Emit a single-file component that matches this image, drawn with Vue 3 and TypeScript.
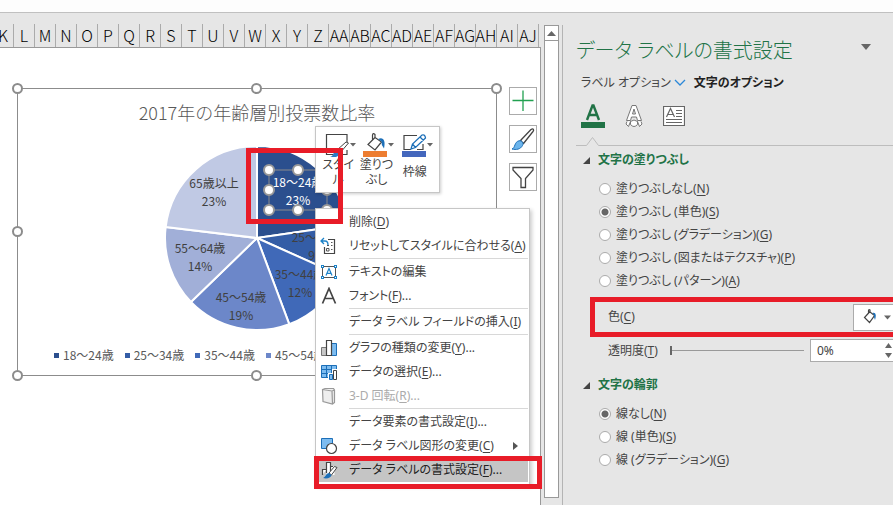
<script setup lang="ts">
import { ref } from 'vue'

interface Slice {
  label: string
  percent: string
  start: number
  end: number
  color: string
  x: number
  y: number
  light?: boolean
}

interface MenuItem {
  id: string
  text: string
  accel?: string
  more?: boolean
  icon?: string
  divider?: boolean
  disabled?: boolean
  submenu?: boolean
  active?: boolean
}

interface Option {
  text: string
  accel: string
}

const columns = [
  ...'KLMNOPQRSTUVWXYZ'.split(''),
  ...'ABCDEFGHIJ'.split('').map((c) => 'A' + c),
]

const slices: Slice[] = [
  { label: '18〜24歳', percent: '23%', start: 0, end: 81.7, color: '#2b4f8e', x: 41, y: -51, light: true },
  { label: '25〜34歳', percent: '9%', start: 81.7, end: 114.2, color: '#345da6', x: 60, y: 4 },
  { label: '35〜44歳', percent: '12%', start: 114.2, end: 159.5, color: '#4069b8', x: 43, y: 41 },
  { label: '45〜54歳', percent: '19%', start: 159.5, end: 225.9, color: '#6c87c9', x: -16, y: 64 },
  { label: '55〜64歳', percent: '14%', start: 225.9, end: 276.8, color: '#a1afd8', x: -57, y: 15 },
  { label: '65歳以上', percent: '23%', start: 276.8, end: 360, color: '#c0c9e4', x: -43, y: -50 },
]

const legendEntries = slices.slice(0, 4)

const radius = 92

function slicePath(slice: Slice): string {
  const at = (deg: number) => {
    const a = (deg * Math.PI) / 180
    return `${(radius * Math.sin(a)).toFixed(2)} ${(-radius * Math.cos(a)).toFixed(2)}`
  }
  const large = slice.end - slice.start > 180 ? 1 : 0
  return `M0 0L${at(slice.start)}A${radius} ${radius} 0 ${large} 1 ${at(slice.end)}Z`
}

const labelHandles = [
  [12, -68], [41, -68], [70, -68],
  [12, -48], [70, -48],
  [12, -28], [41, -28], [70, -28],
]

const menu: MenuItem[] = [
  { id: 'delete', text: '削除', accel: 'D' },
  { id: 'reset', text: 'リセットしてスタイルに合わせる', accel: 'A', icon: 'reset' },
  { id: 'edit', text: 'テキストの編集', icon: 'textbox', divider: true },
  { id: 'font', text: 'フォント', accel: 'F', more: true, icon: 'font' },
  { id: 'field', text: 'データ ラベル フィールドの挿入', accel: 'I', divider: true },
  { id: 'type', text: 'グラフの種類の変更', accel: 'Y', more: true, icon: 'chart', divider: true },
  { id: 'data', text: 'データの選択', accel: 'E', more: true, icon: 'select' },
  { id: 'rotate', text: '3-D 回転', accel: 'R', more: true, icon: 'cube', disabled: true },
  { id: 'point', text: 'データ要素の書式設定', accel: 'I', more: true, divider: true },
  { id: 'shape', text: 'データ ラベル図形の変更', accel: 'C', icon: 'shape', submenu: true },
  { id: 'format', text: 'データ ラベルの書式設定', accel: 'F', more: true, icon: 'format', active: true },
]

const fills: Option[] = [
  { text: '塗りつぶしなし', accel: 'N' },
  { text: '塗りつぶし (単色)', accel: 'S' },
  { text: '塗りつぶし (グラデーション)', accel: 'G' },
  { text: '塗りつぶし (図またはテクスチャ)', accel: 'P' },
  { text: '塗りつぶし (パターン)', accel: 'A' },
]

const outlines: Option[] = [
  { text: '線なし', accel: 'N' },
  { text: '線 (単色)', accel: 'S' },
  { text: '線 (グラデーション)', accel: 'G' },
]

const fill = ref('S')
const outline = ref('N')
const transparency = ref(0)

function step(delta: number) {
  transparency.value = Math.min(100, Math.max(0, Number(transparency.value) + delta))
}

function typeTransparency(event: Event) {
  const value = parseInt((event.target as HTMLInputElement).value, 10)
  transparency.value = Number.isNaN(value) ? 0 : Math.min(100, Math.max(0, value))
}
</script>

<template>
  <div class="window">
    <div class="ribbon-edge"></div>
    <div class="workspace">
      <main class="sheet">
        <div class="column-heads">
          <span v-for="name in columns" :key="name" class="column-head">{{ name }}</span>
        </div>
        <div class="grid">
          <section class="chart">
            <h2 class="chart-title">2017年の年齢層別投票数比率</h2>
            <svg class="pie" viewBox="-92 -92 184 184" width="184" height="184">
              <path
                v-for="s in slices" :key="s.label" :d="slicePath(s)" :fill="s.color"
                stroke="#fff" stroke-width="2" stroke-linejoin="round"
              />
              <g v-for="s in slices" :key="s.label" :class="['slice-label', { light: s.light }]">
                <text :x="s.x" :y="s.y">{{ s.label }}</text>
                <text :x="s.x" :y="s.y + 18">{{ s.percent }}</text>
              </g>
              <rect x="12" y="-68" width="58" height="40" fill="none" stroke="#8c8c8c" />
              <circle
                v-for="([x, y], i) in labelHandles" :key="i" :cx="x" :cy="y" r="5"
                fill="#fff" stroke="#999" stroke-width="2"
              />
            </svg>
            <div class="legend">
              <span v-for="s in legendEntries" :key="s.label" class="legend-item">
                <svg width="5" height="5"><rect width="5" height="5" :fill="s.color" /></svg>
                {{ s.label }}
              </span>
            </div>
            <i class="handle top left"></i>
            <i class="handle top middle"></i>
            <i class="handle top right"></i>
            <i class="handle center left"></i>
            <i class="handle center right"></i>
            <i class="handle bottom left"></i>
            <i class="handle bottom middle"></i>
            <i class="handle bottom right"></i>
          </section>

          <div class="chart-buttons">
            <button type="button" aria-label="グラフ要素">
              <svg width="26" height="26" fill="none" stroke="#21a050" stroke-width="1.3">
                <path d="M13 2.500V23M2.500 12.500H23.500" />
              </svg>
            </button>
            <button type="button" aria-label="グラフ スタイル">
              <svg width="26" height="26" fill="none" stroke-linejoin="round">
                <path d="M10.500 14.500L21 3.500C23 2 24.500 3.500 23 5.500L13.500 17.500Z" fill="#fff" stroke="#444" stroke-width="1.300" />
                <path d="M2 23C5.500 22 4 16 9 14.800C12 14.300 14 17 12.500 19.500C10.500 23.500 6 24 2 23Z" fill="#6cb5ec" stroke="#1c6fb8" />
              </svg>
            </button>
            <button type="button" aria-label="グラフ フィルター">
              <svg width="26" height="26" fill="none" stroke="#444" stroke-width="1.300">
                <path d="M3 3.500H23V6L15.500 14.500V23.500H11V14.500L3 6Z" />
              </svg>
            </button>
          </div>

          <div class="mini-toolbar">
            <button type="button">
              <svg width="31" height="24" fill="none">
                <path d="M22 9V1.500H1.500V21.500H8M22 17V21.500H17" stroke="#444" stroke-width="1.200" />
                <path d="M12 17L21 9L23.500 10L15 20Z" fill="#fff" stroke="#444" />
                <path d="M5 24C9 23 8 18 12 17.500L15 20C14 24 9 25 5 24Z" fill="#2b7ec6" />
                <path d="M25 10H31L28 13.500Z" fill="#666" />
              </svg>
              <span>スタイ<br />ル</span>
            </button>
            <button type="button">
              <svg width="31" height="24" fill="none">
                <path d="M12 4.500L5 11.500L12 17L18.500 9L12 4.500V1.500Q10 -0.500 9.500 2V7" stroke="#444" stroke-width="1.200" />
                <path d="M15 6C20 3.500 23 7 21 15.500Q18 12 18.500 8.500Z" fill="#1c6fb8" />
                <path d="M25 10H31L28 13.500Z" fill="#666" />
                <path d="M0 18H24V24H0Z" fill="#ed7d31" />
              </svg>
              <span>塗りつ<br />ぶし</span>
            </button>
            <button type="button">
              <svg width="31" height="24" fill="none">
                <path d="M15 2.500H2V16.500H9M21 11V16.500H15" stroke="#444" stroke-width="1.200" />
                <path d="M9 16L10.500 11L20 2Q23 1 23.500 5L13.500 14.500ZM18 4L21.500 7.500M10.500 11L13.500 14.500" stroke="#1c6fb8" stroke-width="1.300" fill="#fff" />
                <path d="M25 10H31L28 13.500Z" fill="#666" />
                <path d="M0 18H24V24H0Z" fill="#4467bd" />
              </svg>
              <span>枠線</span>
            </button>
          </div>

          <ul class="context-menu">
            <li v-for="item in menu" :key="item.id" :class="{ divider: item.divider }">
              <button type="button" :class="{ active: item.active }" :disabled="item.disabled">
                <svg class="menu-icon" width="18" height="18" fill="none">
                  <g v-if="item.icon === 'reset'">
                    <path d="M8 2.500H14.500V16.500H4.500V10" stroke="#444" stroke-width="1.200" />
                    <path d="M4 1L1 4L4 7M1.500 4H5Q8 4 8 8" stroke="#1c82c8" stroke-width="1.300" />
                    <path d="M7 8.500H9M11 8.500H12.500M6.500 11.500H9V14H6.500ZM11 12.500H12.500M11 5.500H12.500" stroke="#555" />
                  </g>
                  <g v-else-if="item.icon === 'textbox'">
                    <path d="M2.500 3.500H15.500V14.500H2.500Z" stroke="#555" />
                    <path d="M6 12.500L9 5.500L12 12.500M7 10.300H11" stroke="#1c82c8" stroke-width="1.200" />
                    <path d="M1 2H4V5H1ZM14 2H17V5H14ZM1 13H4V16H1ZM14 13H17V16H14Z" fill="#1c82c8" />
                    <path d="M2 3H3V4H2ZM15 3H16V4H15ZM2 14H3V15H2ZM15 14H16V15H15Z" fill="#fff" />
                  </g>
                  <path v-else-if="item.icon === 'font'" d="M2.500 16.500L9 1.500L15.500 16.500M5 11.500H13" stroke="#444" stroke-width="1.700" />
                  <g v-else-if="item.icon === 'chart'">
                    <path d="M1.500 8.500H6.500V16.500H1.500Z" fill="#c8c8c8" stroke="#777" />
                    <path d="M11.500 4.500H16.500V16.500H11.500Z" fill="#7dbcf0" stroke="#1c6fb8" />
                    <path d="M6.500 1.500H11.500V16.500H6.500Z" fill="#fff" stroke="#444" stroke-width="1.200" />
                  </g>
                  <g v-else-if="item.icon === 'select'">
                    <path d="M1.500 2.500H16.500V14.500H1.500Z" fill="#7dbcf0" stroke="#1c6fb8" />
                    <path d="M1.500 6.500H16.500M1.500 10.500H16.500M6.500 2.500V14.500M11.500 2.500V14.500" stroke="#1c6fb8" />
                    <path d="M8 10H12V6H18V18H8Z" fill="#fff" />
                    <path d="M9.500 11.500H12.500V16.500H9.500Z" fill="#7dbcf0" stroke="#1c6fb8" />
                    <path d="M13.500 7.500H16.500V16.500H13.500Z" fill="#fff" stroke="#444" />
                  </g>
                  <path v-else-if="item.icon === 'cube'" d="M2.500 2.500L5 1.500H13.500L14.500 3V15.500L12.500 17L3 14.500ZM2.500 2.500L12 4L14.500 3M12 4L12.500 17" fill="#eee" stroke="#999" stroke-width="1.200" />
                  <g v-else-if="item.icon === 'shape'">
                    <path d="M1.500 1.500H12.500V11.500H1.500Z" fill="#7dbcf0" stroke="#1c6fb8" />
                    <circle cx="11.500" cy="11.500" r="5" fill="#fff" stroke="#444" stroke-width="1.200" />
                  </g>
                  <g v-else-if="item.icon === 'format'">
                    <path d="M2.500 14V8.500H6.500V1.500H10.500V5.500H14.500V14H6.500V8.500Z" fill="#fff" />
                    <path d="M6.500 12V1.500H10.500V10M2.500 14V8.500H6.500M10.500 5.500H13" stroke="#444" stroke-width="1.200" />
                    <path d="M9 12L14.500 5.500L17 6.500L11.500 14Z" fill="#fff" stroke="#444" />
                    <path d="M3 17C6 16 6 12 9 12L11.500 14C11 17 7 18 3 17Z" fill="#1c6fb8" />
                  </g>
                </svg>
                <span>{{ item.text }}<template v-if="item.accel">(<u>{{ item.accel }}</u>)</template><template v-if="item.more">...</template></span>
                <svg v-if="item.submenu" class="submenu-arrow" width="5" height="8"><path d="M0 0L5 4L0 8Z" fill="#555" /></svg>
              </button>
            </li>
          </ul>

          <div class="callout label-callout"></div>
          <div class="callout menu-callout"></div>
        </div>
      </main>

      <div class="scrollbar">
        <button type="button" aria-label="上へスクロール">
          <svg width="9" height="5"><path d="M0 5L4.500 0L9 5Z" fill="#666" /></svg>
        </button>
        <div class="thumb"></div>
      </div>

      <aside class="pane">
        <header class="pane-header">
          <h1>データ ラベルの書式設定</h1>
          <button type="button" aria-label="作業ウィンドウのオプション">
            <svg width="10" height="6"><path d="M0 0H10L5 6Z" fill="#666" /></svg>
          </button>
        </header>

        <nav class="tabs">
          <button type="button">
            ラベル オプション
            <svg width="12" height="8" fill="none" stroke="#2b88d8" stroke-width="1.300"><path d="M1 1L6 6L11 1" /></svg>
          </button>
          <button type="button" class="current">文字のオプション</button>
        </nav>

        <div class="pane-icons">
          <button type="button" aria-label="文字の塗りつぶしと輪郭">
            <svg width="24" height="24" fill="none">
              <path d="M6 16L11.500 1.500H12.500L18 16M8 11H16" stroke="#217346" stroke-width="2.400" />
              <path d="M0 18H24V24H0Z" fill="#217346" />
            </svg>
          </button>
          <button type="button" aria-label="文字の効果">
            <svg width="18" height="24" fill="none" stroke="#777">
              <path d="M1.500 16.500L7 1.500H11L16.500 16.500H12.500L11.500 13H6.500L5.500 16.500ZM7.500 10H10.500L9 5Z" fill="#fff" />
              <path d="M2 17.500L1 20L3.500 22.500L5.500 17.500M16 17.500L17 20L14.500 22.500L12.500 17.500M5.500 17.500Q9 14.500 12.500 17.500V20.500Q9 24.500 5.500 20.500Z" fill="#fff" />
            </svg>
          </button>
          <button type="button" aria-label="テキスト ボックス">
            <svg width="22" height="20" fill="none" stroke="#666">
              <path d="M0.500 0.500H21.500V19.500H0.500Z" fill="#fff" stroke-width="1.200" />
              <path d="M3.500 11L7.500 2.500L11.500 11M5 8.500H10" stroke-width="1.200" />
              <path d="M13 4.500H19M13 7.500H19M13 10.500H19M3 13.500H19M3 16.500H19" />
            </svg>
          </button>
        </div>

        <div class="notch">
          <svg width="25" height="10" fill="none" stroke="#bdbdbd"><path d="M0 9.500H10.500L16.500 1.500L22.500 9.500H25" /></svg>
          <span></span>
        </div>

        <fieldset>
          <legend>
            <svg width="7" height="7"><path d="M7 0V7H0Z" fill="#444" /></svg>
            文字の塗りつぶし
          </legend>
          <label v-for="o in fills" :key="o.accel" class="option">
            <input v-model="fill" type="radio" name="fill" :value="o.accel" />
            <span>{{ o.text }}(<u>{{ o.accel }}</u>)</span>
          </label>
          <div class="color-row">
            <label for="color">色(<u>C</u>)</label>
            <button id="color" type="button">
              <svg width="28" height="16" fill="none">
                <path d="M7 2.500L1.500 8.500L6.500 13.500L11.500 6.500L7 3V1Q5.500 0 5.500 2V5" stroke="#444" stroke-width="1.200" />
                <path d="M9.500 4C13 3 13.500 7 12 11Q10.500 8 11 6Z" fill="#1c6fb8" />
                <path d="M21 6.500H28L24.500 10.500Z" fill="#666" />
              </svg>
            </button>
          </div>
          <div class="transparency-row">
            <label for="transparency">透明度(<u>T</u>)</label>
            <input id="transparency" v-model="transparency" type="range" min="0" max="100" />
            <div class="spinner">
              <input type="text" aria-label="透明度" :value="transparency + '%'" @change="typeTransparency" />
              <div class="spin-buttons">
                <button type="button" aria-label="増やす" @click="step(1)">
                  <svg width="7" height="5"><path d="M0 5L3.500 0L7 5Z" fill="#666" /></svg>
                </button>
                <button type="button" aria-label="減らす" @click="step(-1)">
                  <svg width="7" height="5"><path d="M0 0H7L3.500 5Z" fill="#666" /></svg>
                </button>
              </div>
            </div>
          </div>
        </fieldset>

        <fieldset class="outline-group">
          <legend>
            <svg width="7" height="7"><path d="M7 0V7H0Z" fill="#444" /></svg>
            文字の輪郭
          </legend>
          <label v-for="o in outlines" :key="o.accel" class="option">
            <input v-model="outline" type="radio" name="outline" :value="o.accel" />
            <span>{{ o.text }}(<u>{{ o.accel }}</u>)</span>
          </label>
        </fieldset>
      </aside>
    </div>
  </div>
</template>

<style>
body {
  background: #e6e6e6;
}
</style>

<style scoped>
.window {
  display: flex;
  flex-direction: column;
  min-height: 100vh;
  overflow: hidden;
  background: #e6e6e6;
  color: #444;
  font: 12px/20px "Noto Sans", "Noto Sans CJK JP", sans-serif;
  font-feature-settings: "palt";
}

.window *,
.window {
  box-sizing: border-box;
}

button,
input {
  margin: 0;
  padding: 0;
  border: 0;
  border-radius: 0;
  background: none;
  color: inherit;
  font: inherit;
  font-feature-settings: inherit;
}

svg {
  display: block;
  flex: none;
}

u {
  text-underline-offset: 2px;
}

.ribbon-edge {
  height: 13px;
  border-bottom: 1px solid #c0c0c0;
  background: #fdfdfd;
}

.workspace {
  display: grid;
  flex: 1;
  grid-template-columns: minmax(0, 1fr) 15px 331px;
  column-gap: 3px;
}

/* Worksheet */
.sheet {
  display: flex;
  flex-direction: column;
  min-width: 0;
  padding-top: 11px;
}

.column-heads {
  display: flex;
  overflow: hidden;
  height: 24px;
  padding-right: 3px;
  border-bottom: 1px solid #999;
}

.column-head {
  display: flex;
  flex: none;
  justify-content: center;
  width: 21px;
  border-right: 1px solid #ababab;
  color: #000;
  font-weight: 300;
  font-size: 16px;
  font-family: "Noto Sans CJK JP", sans-serif;
  line-height: 22px;
  white-space: nowrap;
}

.column-head:first-child {
  margin-left: -7px;
}

.grid {
  position: relative;
  flex: 1;
  min-height: 442px;
  border-right: 1px solid #999;
  background: #fff;
}

.chart {
  position: absolute;
  top: 40px;
  left: 17px;
  display: flex;
  flex-direction: column;
  align-items: center;
  width: 480px;
  height: 288px;
  padding-top: 9px;
  border: 1px solid #8c8c8c;
  font-family: "Noto Sans CJK JP", sans-serif;
}

.chart-title {
  margin: 0 0 20px;
  color: #595959;
  font-weight: 300;
  font-size: 18px;
  line-height: 28px;
  font-feature-settings: normal;
}

.pie {
  overflow: visible;
}

.slice-label {
  fill: #404040;
  font-feature-settings: normal;
  text-anchor: middle;
}

.slice-label.light {
  fill: #fff;
}

.legend {
  display: flex;
  align-self: stretch;
  gap: 11px;
  margin-top: 15px;
  padding-left: 36px;
  overflow: hidden;
  color: #595959;
  font-feature-settings: normal;
}

.legend-item {
  display: flex;
  flex: none;
  align-items: center;
  gap: 4px;
}

.handle {
  position: absolute;
  width: 11px;
  height: 11px;
  border: 2px solid #8c8c8c;
  border-radius: 50%;
  background: #fff;
}

.handle.top { top: -6px; }
.handle.center { top: calc(50% - 6px); }
.handle.bottom { bottom: -6px; }
.handle.left { left: -6px; }
.handle.middle { left: calc(50% - 6px); }
.handle.right { right: -6px; }

.chart-buttons {
  position: absolute;
  top: 39px;
  left: 509px;
  display: grid;
  gap: 10px;
}

.chart-buttons button {
  width: 28px;
  height: 28px;
  border: 1px solid #ababab;
  background: #fff;
}

.mini-toolbar {
  position: absolute;
  top: 78px;
  left: 315px;
  display: flex;
  width: 125px;
  height: 67px;
  padding: 6px 5px 0 3px;
  border: 1px solid #c6c6c6;
  background: #fff;
  box-shadow: 1px 1px 3px #0003;
}

.mini-toolbar button {
  display: flex;
  flex: 1 0 0;
  flex-direction: column;
  align-items: center;
  line-height: 15px;
}

.mini-toolbar svg {
  margin-left: 5px;
}

.mini-toolbar span {
  display: grid;
  align-content: center;
  height: 30px;
  text-align: center;
  white-space: nowrap;
}

.mini-toolbar span {
  display: block;
}

.mini-toolbar button:last-child span {
  line-height: 30px;
}

.context-menu {
  position: absolute;
  top: 160px;
  left: 315px;
  width: 215px;
  margin: 0;
  padding: 1px 1px 2px;
  border: 1px solid #c6c6c6;
  background: #fff;
  box-shadow: 2px 2px 4px #0003;
  list-style: none;
}

.context-menu .divider::before {
  display: block;
  height: 1px;
  margin: 0 0 1px 32px;
  background: #d8d8d8;
  content: "";
}

.context-menu button {
  display: flex;
  align-items: center;
  width: 100%;
  height: 24px;
  padding: 0 10px 0 3px;
  text-align: left;
  white-space: nowrap;
}

.context-menu button:disabled {
  color: #ababab;
}

.context-menu button.active {
  background: #c5c5c5;
  color: #222;
}

.menu-icon {
  margin-right: 11px;
}

.submenu-arrow {
  margin-left: auto;
}

.callout {
  position: absolute;
  border: 5px solid #e81c28;
  pointer-events: none;
}

.label-callout {
  top: 100px;
  left: 246px;
  width: 97px;
  height: 76px;
}

.menu-callout {
  top: 408px;
  left: 314px;
  width: 228px;
  height: 33px;
}

/* Scroll bar */
.scrollbar {
  display: flex;
  flex-direction: column;
  padding: 12px 0 7px;
}

.scrollbar button,
.thumb {
  border: 1px solid #999;
  background: #fff;
}

.scrollbar button {
  display: grid;
  place-items: center;
  height: 16px;
}

.thumb {
  flex: 1;
  margin-top: -1px;
}

/* Format pane */
.pane {
  margin-top: 12px;
  padding: 10px 0 0 13px;
  border-left: 1px solid #b4b4b4;
}

.pane-header {
  display: flex;
  justify-content: space-between;
  padding-right: 22px;
}

.pane-header h1 {
  margin: 0;
  color: #217346;
  font-weight: 300;
  font-size: 20px;
  line-height: 32px;
}

.pane-header button {
  height: 24px;
}

.tabs {
  display: flex;
  gap: 8px;
  margin-top: 6px;
  padding-left: 5px;
}

.tabs button {
  display: flex;
  align-items: center;
  gap: 3px;
}

.tabs .current {
  color: #222;
  font-weight: 700;
}

.pane-icons {
  display: flex;
  align-items: center;
  gap: 20px;
  height: 24px;
  margin-top: 11px;
  padding-left: 5px;
}

.notch {
  display: flex;
  align-items: flex-end;
  margin-top: 8px;
}

.notch span {
  flex: 1;
  height: 1px;
  background: #bdbdbd;
}

fieldset {
  min-width: 0;
  margin: 4px 0 0;
  padding: 0;
  border: 0;
}

legend {
  display: flex;
  align-items: center;
  gap: 8px;
  padding: 0 0 0 7px;
  margin-bottom: 7px;
  color: #217346;
  font-weight: 700;
}

.outline-group {
  margin-top: 13px;
}

.option {
  display: flex;
  align-items: center;
  gap: 5px;
  height: 23px;
  padding-left: 23px;
}

.option input {
  width: 12px;
  height: 12px;
  border: 1px solid #ababab;
  border-radius: 50%;
  background: #fff;
  appearance: none;
}

.option input:checked {
  background: radial-gradient(circle, #666 3px, #fff 4px);
}

.color-row {
  display: flex;
  align-items: center;
  justify-content: space-between;
  height: 40px;
  margin: 5px 0 0 14px;
  padding-left: 13px;
  border: 5px solid #e81c28;
  border-right: 0;
}

.color-row button {
  width: 40px;
  height: 27px;
  padding-left: 9px;
  border: 1px solid #ababab;
  border-right: 0;
  background: #fff;
}

.transparency-row {
  display: flex;
  align-items: center;
  margin-top: 2px;
  padding-left: 32px;
}

.transparency-row input[type="range"] {
  flex: 1;
  min-width: 0;
  height: 9px;
  margin: 0 6px 0 12px;
  background: linear-gradient(#999, #999) center / 100% 1px no-repeat;
  appearance: none;
}

.transparency-row input[type="range"]::-webkit-slider-thumb {
  width: 2px;
  height: 9px;
  background: #666;
  appearance: none;
}

.spinner {
  display: flex;
  width: 83px;
  height: 23px;
  border: 1px solid #ababab;
  border-right: 0;
  background: #fff;
}

.spinner input {
  flex: 1;
  min-width: 0;
  padding-left: 6px;
}

.spin-buttons {
  display: grid;
  width: 9px;
}

.spin-buttons button {
  display: grid;
  place-items: center;
}
</style>
